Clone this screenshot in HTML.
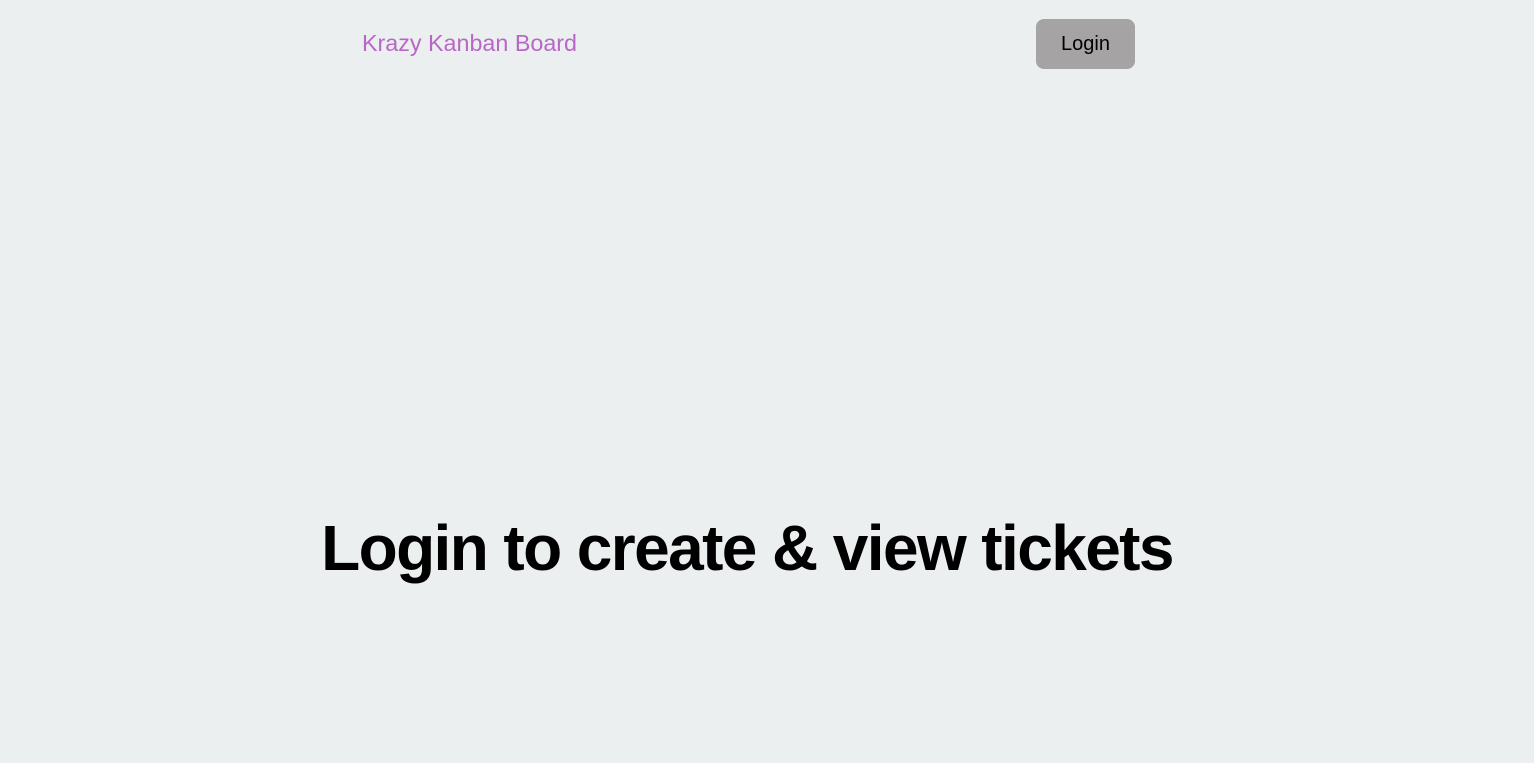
<!DOCTYPE html>
<html><head><style>
html,body{margin:0;padding:0;width:1534px;height:763px;background:#eceff0;overflow:hidden;font-family:"Liberation Sans",sans-serif;}
.brand{position:absolute;left:362px;top:30px;font-size:23.3px;color:#b967c7;}
.btn{position:absolute;left:1036px;top:19px;width:99px;height:50px;border-radius:8px;background:#a5a3a4;color:#000;font-size:20px;line-height:50px;text-align:center;}
h1{position:absolute;left:0;width:1494px;top:510px;margin:0;text-align:center;font-size:64px;font-weight:bold;color:#000;letter-spacing:-1.6px;line-height:76px;}
</style></head><body>
<div class="brand">Krazy Kanban Board</div>
<div class="btn">Login</div>
<h1>Login to create &amp; view tickets</h1>
</body></html>
